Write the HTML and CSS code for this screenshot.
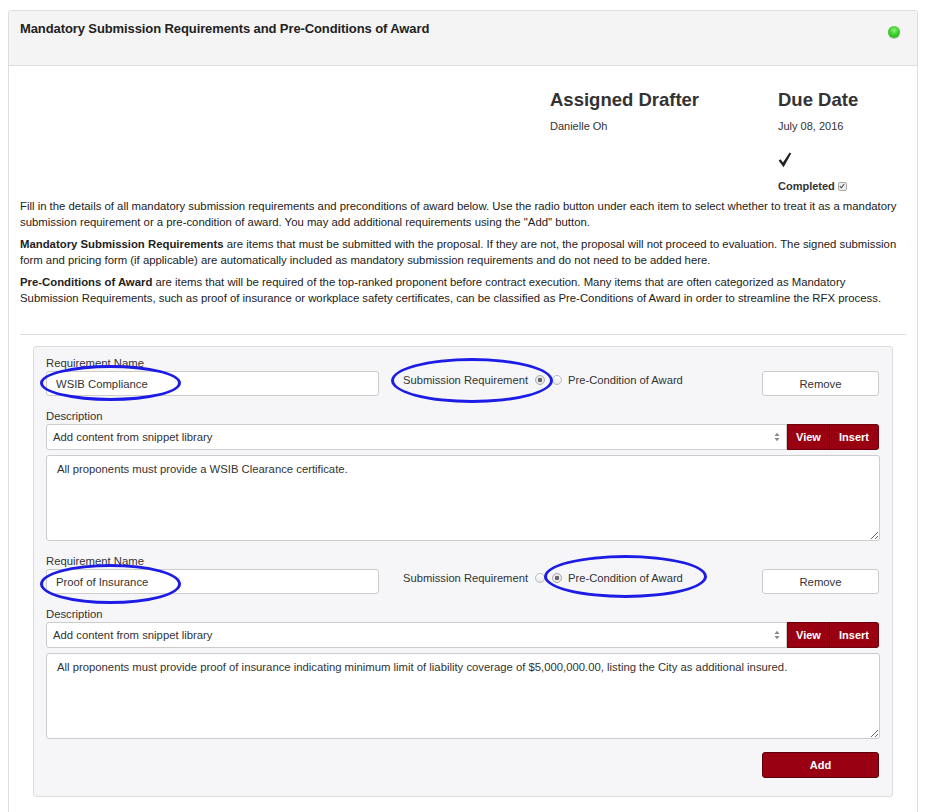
FILE: index.html
```html
<!DOCTYPE html>
<html lang="en">
<head>
    <meta charset="UTF-8">
    <meta name="viewport" content="width=device-width, initial-scale=1.0">
    <title>Mandatory Submission Requirements</title>
    <link rel="stylesheet" href="styles.css">
</head>
<body>
    <div class="section-panel">
        <div class="panel-heading">
            <h4 class="panel-title">Mandatory Submission Requirements and Pre-Conditions of Award</h4>
            <span class="status-dot"></span>
        </div>

        <div class="panel-body">
            <!-- Drafter / due date summary -->
            <div class="meta">
                <div class="meta-col drafter">
                    <h3>Assigned Drafter</h3>
                    <p>Danielle Oh</p>
                </div>
                <div class="meta-col due">
                    <h3>Due Date</h3>
                    <p>July 08, 2016</p>
                    <svg class="big-check" width="14" height="16" viewBox="0 0 14 16">
                        <path d="M0.6 8.6 L2.6 7.2 L5 10.4 L11.6 0.6 L13.2 1.6 L5.6 15.2 Z" fill="#222"/>
                    </svg>
                    <p class="completed">Completed
                        <span class="mini-box">
                            <svg width="6" height="6" viewBox="0 0 6 6"><path d="M0.8 3.2 L2.3 4.8 L5.2 1" fill="none" stroke="#555" stroke-width="1.2"/></svg>
                        </span>
                    </p>
                </div>
            </div>

            <p class="intro">Fill in the details of all mandatory submission requirements and preconditions of award below. Use the radio button under each item to select whether to treat it as a mandatory submission requirement or a pre-condition of award. You may add additional requirements using the "Add" button.</p>
            <p class="intro"><strong>Mandatory Submission Requirements</strong> are items that must be submitted with the proposal. If they are not, the proposal will not proceed to evaluation. The signed submission form and pricing form (if applicable) are automatically included as mandatory submission requirements and do not need to be added here.</p>
            <p class="intro"><strong>Pre-Conditions of Award</strong> are items that will be required of the top-ranked proponent before contract execution. Many items that are often categorized as Mandatory Submission Requirements, such as proof of insurance or workplace safety certificates, can be classified as Pre-Conditions of Award in order to streamline the RFX process.</p>

            <hr class="divider">

            <div class="req-card">
                <!-- Requirement 1 -->
                <div class="req-item">
                    <label class="field-label">Requirement Name</label>
                    <div class="req-row">
                        <div class="name-wrap">
                            <input type="text" class="name-input" value="WSIB Compliance">
                            <span class="ring ring-name"></span>
                        </div>
                        <div class="type-choice">
                            <span>Submission Requirement</span>
                            <input type="radio" name="type1" class="radio" checked>
                            <input type="radio" name="type1" class="radio">
                            <span>Pre-Condition of Award</span>
                            <span class="ring ring-sub"></span>
                        </div>
                        <button class="btn-remove">Remove</button>
                    </div>
                    <label class="field-label desc-label">Description</label>
                    <div class="snippet-row">
                        <div class="select-wrap">
                            <select class="snippet-select">
                                <option>Add content from snippet library</option>
                            </select>
                            <svg class="select-arrows" width="6" height="10" viewBox="0 0 6 10">
                                <path d="M0.5 4 L3 0.8 L5.5 4 Z M0.5 6 L3 9.2 L5.5 6 Z" fill="#888"/>
                            </svg>
                        </div>
                        <button class="btn-red btn-view">View</button>
                        <button class="btn-red btn-insert">Insert</button>
                    </div>
                    <textarea class="desc-text">All proponents must provide a WSIB Clearance certificate.</textarea>
                </div>

                <!-- Requirement 2 -->
                <div class="req-item">
                    <label class="field-label">Requirement Name</label>
                    <div class="req-row">
                        <div class="name-wrap">
                            <input type="text" class="name-input" value="Proof of Insurance">
                            <span class="ring ring-name2"></span>
                        </div>
                        <div class="type-choice">
                            <span>Submission Requirement</span>
                            <input type="radio" name="type2" class="radio">
                            <input type="radio" name="type2" class="radio" checked>
                            <span>Pre-Condition of Award</span>
                            <span class="ring ring-pre"></span>
                        </div>
                        <button class="btn-remove">Remove</button>
                    </div>
                    <label class="field-label desc-label">Description</label>
                    <div class="snippet-row">
                        <div class="select-wrap">
                            <select class="snippet-select">
                                <option>Add content from snippet library</option>
                            </select>
                            <svg class="select-arrows" width="6" height="10" viewBox="0 0 6 10">
                                <path d="M0.5 4 L3 0.8 L5.5 4 Z M0.5 6 L3 9.2 L5.5 6 Z" fill="#888"/>
                            </svg>
                        </div>
                        <button class="btn-red btn-view">View</button>
                        <button class="btn-red btn-insert">Insert</button>
                    </div>
                    <textarea class="desc-text">All proponents must provide proof of insurance indicating minimum limit of liability coverage of $5,000,000.00, listing the City as additional insured.</textarea>
                </div>

                <div class="add-row">
                    <button class="btn-add">Add</button>
                </div>
            </div>
        </div>
    </div>
</body>
</html>
```

FILE: styles.css
```css
/* General Styles */
body {
    font-family: "Liberation Sans", Arial, sans-serif;
    margin: 0;
    padding: 10px 9px 0 8px;
    background-color: #fff;
    color: #333;
    font-size: 11.3px;
}

.section-panel {
    border: 1px solid #ddd;
    border-bottom: none;
    border-radius: 4px 4px 0 0;
    min-height: 820px;
}

.panel-heading {
    display: flex;
    justify-content: space-between;
    align-items: flex-start;
    height: 54px;
    padding: 0 17px 0 11px;
    background-color: #f4f4f4;
    border-bottom: 1px solid #ddd;
    border-radius: 4px 4px 0 0;
}

.panel-title {
    margin: 9px 0 0;
    font-size: 13px;
    line-height: 17px;
    font-weight: bold;
    color: #222;
    letter-spacing: -0.1px;
}

.status-dot {
    width: 12px;
    height: 12px;
    margin-top: 15px;
    border-radius: 50%;
    background: radial-gradient(circle at 50% 35%, #8ef27c 0%, #3fcf2c 45%, #22a716 100%);
    box-shadow: 0 1px 1px rgba(0, 0, 0, 0.2);
}

.panel-body {
    padding: 0 11px;
}

/* Drafter and due date */
.meta {
    display: flex;
    justify-content: flex-end;
    padding-top: 23px;
}

.meta-col h3 {
    margin: 0;
    font-size: 18.5px;
    line-height: 22px;
    font-weight: bold;
    color: #333;
}

.meta-col p {
    margin: 7px 0 0;
    font-size: 11px;
    line-height: 16px;
}

.drafter {
    width: 228px;
}

.due {
    width: 128px;
}

.big-check {
    display: block;
    margin-top: 18px;
}

.meta-col p.completed {
    margin-top: 10px;
    font-weight: bold;
    display: flex;
    align-items: center;
    gap: 3px;
}

.mini-box {
    display: inline-flex;
    align-items: center;
    justify-content: center;
    width: 7px;
    height: 7px;
    border: 1px solid #aaa;
    border-radius: 2px;
    background: #eee;
}

.intro {
    margin: 5px 6px 7px 0;
    font-size: 11.35px;
    line-height: 15.5px;
    color: #222;
}

.intro + .intro {
    margin-top: 0;
}

.intro strong {
    color: #222;
}

.divider {
    margin: 28px 0 11px;
    border: none;
    border-top: 1px solid #ddd;
}

/* Requirement card */
.req-card {
    margin: 0 13px;
    padding: 10px 12px 18px;
    background-color: #f6f6f8;
    border: 1px solid #ddd;
    border-radius: 3px;
}

.req-item + .req-item {
    margin-top: 14px;
}

.field-label {
    display: block;
    line-height: 13px;
    margin-bottom: 1px;
    color: #333;
    position: relative;
    z-index: 1;
}

.desc-label {
    margin-top: 14px;
    margin-bottom: 1px;
}

.req-row {
    display: flex;
    align-items: flex-start;
}

.name-wrap,
.type-choice,
.select-wrap {
    position: relative;
}

.name-input {
    box-sizing: border-box;
    width: 333px;
    height: 25px;
    margin: 0;
    padding: 0 9px;
    border: 1px solid #ccc;
    border-radius: 3px;
    background: #fff;
    font-family: inherit;
    font-size: 11.3px;
    color: #333;
}

.type-choice {
    display: flex;
    align-items: center;
    margin-left: 24px;
    margin-top: 1px;
    height: 16px;
    font-size: 11.2px;
    color: #333;
}

.radio {
    appearance: none;
    width: 10px;
    height: 10px;
    margin: 0 0 0 7px;
    border: 1px solid #bbb;
    border-radius: 50%;
    background: linear-gradient(#fff, #e6e6e6);
}

.radio + .radio {
    margin-right: 6px;
}

.radio:checked {
    background: radial-gradient(circle, #666 0, #666 2px, #e9e9e9 2.5px, #e9e9e9 100%);
    border-color: #aaa;
}

.btn-remove {
    margin-left: auto;
    margin-right: 1px;
    width: 117px;
    height: 25px;
    background: #fff;
    border: 1px solid #ccc;
    border-radius: 3px;
    font-family: inherit;
    font-size: 11.3px;
    color: #333;
}

.snippet-row {
    display: flex;
}

.select-wrap {
    flex: 1;
}

.snippet-select {
    appearance: none;
    box-sizing: border-box;
    width: 100%;
    height: 26px;
    padding: 0 6px;
    border: 1px solid #ccc;
    border-radius: 3px 0 0 3px;
    background: #fff;
    font-family: inherit;
    font-size: 11.3px;
    color: #333;
}

.select-arrows {
    position: absolute;
    right: 7px;
    top: 8px;
}

.btn-red {
    height: 26px;
    border: 1px solid #6e000c;
    background-color: #990011;
    color: #fff;
    font-family: inherit;
    font-size: 11px;
    font-weight: bold;
}

.btn-view {
    width: 43px;
    border-right-color: #5c000a;
}

.btn-insert {
    width: 49px;
    margin-right: 1px;
    border-left: none;
    border-radius: 0 3px 3px 0;
}

.desc-text {
    display: block;
    box-sizing: border-box;
    width: 100%;
    height: 86px;
    margin-top: 5px;
    padding: 7px 10px;
    border: 1px solid #ccc;
    border-radius: 3px;
    background: #fff;
    font-family: inherit;
    font-size: 11.3px;
    color: #333;
}

.add-row {
    display: flex;
    justify-content: flex-end;
    margin-top: 13px;
}

.btn-add {
    width: 117px;
    height: 26px;
    margin-right: 1px;
    background-color: #990011;
    border: 1px solid #5a0008;
    border-radius: 3px;
    color: #fff;
    font-family: inherit;
    font-size: 11px;
    font-weight: bold;
}

/* Hand-drawn highlight rings */
.ring {
    position: absolute;
    border: 3px solid #1c1ce6;
    border-radius: 50%;
    pointer-events: none;
    z-index: 2;
}

.ring-name {
    left: -6px;
    top: -6px;
    width: 135px;
    height: 30px;
}

.ring-name2 {
    left: -6px;
    top: -5px;
    width: 135px;
    height: 34px;
}

.ring-sub {
    left: -12px;
    top: -14px;
    width: 156px;
    height: 39px;
}

.ring-pre {
    left: 141px;
    top: -15px;
    width: 157px;
    height: 37px;
}
```
